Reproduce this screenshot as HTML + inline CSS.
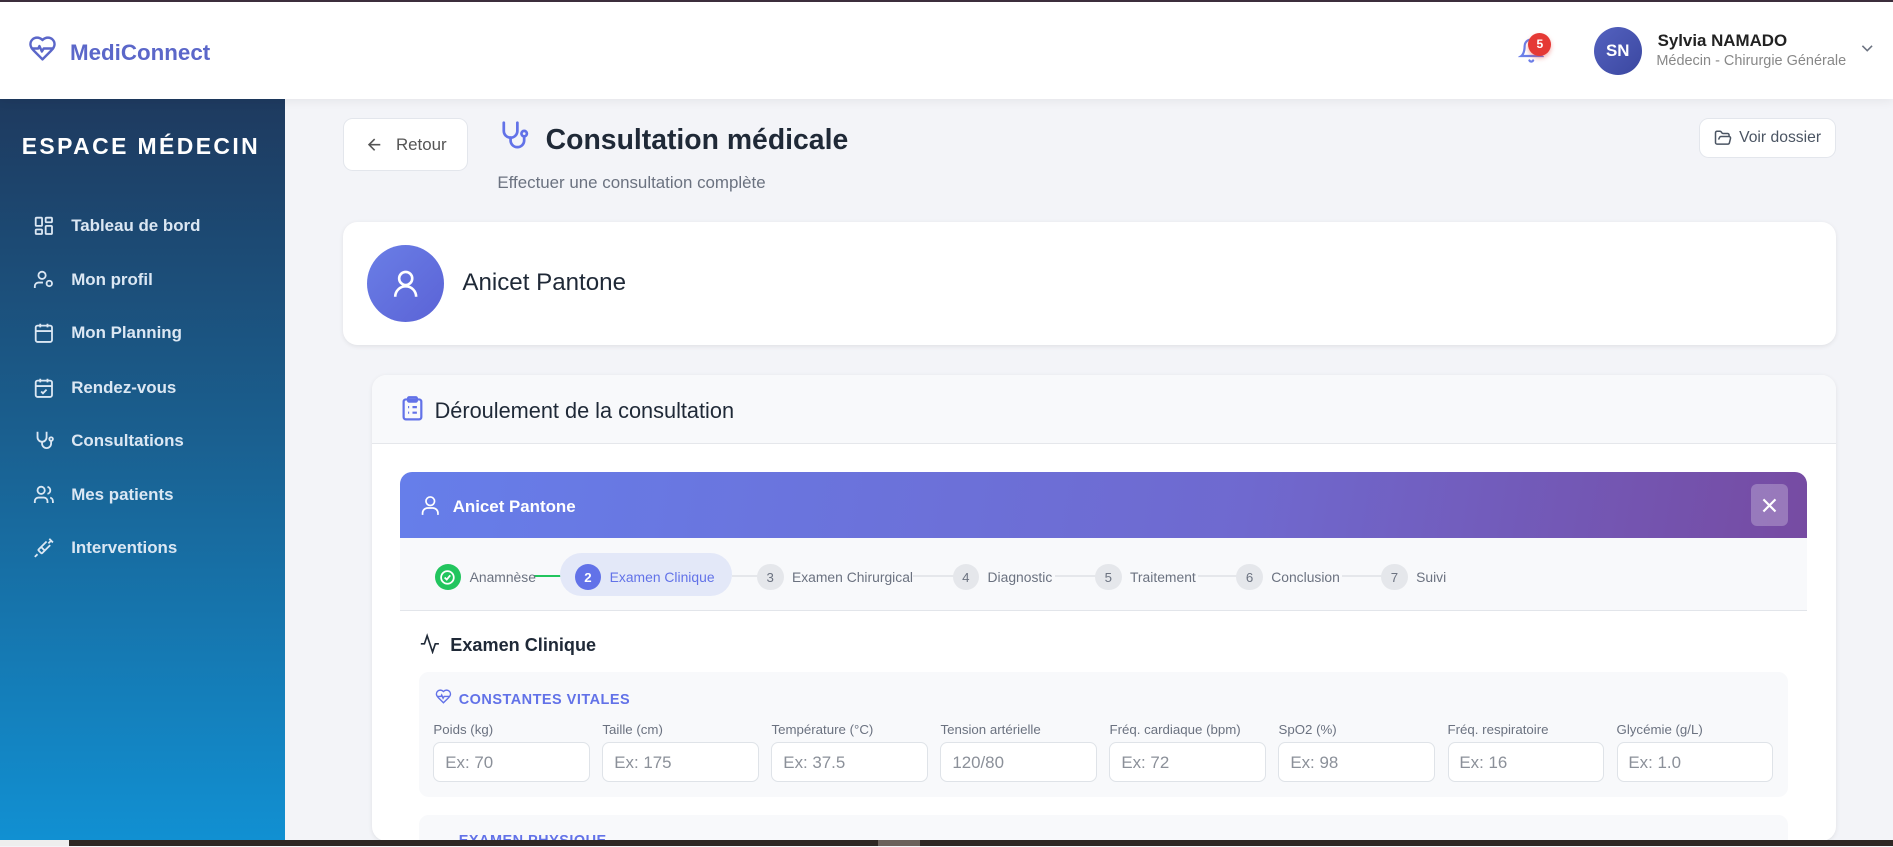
<!DOCTYPE html>
<html><head><meta charset="utf-8"><style>
html{zoom:1.20727}
*{box-sizing:border-box;margin:0;padding:0}
body{width:1568px;height:701px;overflow:hidden;background:#f3f4f8;font-family:"Liberation Sans","DejaVu Sans",sans-serif;color:#1f2937}
#w{position:relative;width:1568px;height:701px;overflow:hidden}
.abs{position:absolute}
svg{display:block}
.topline{left:0;top:0;width:1568px;height:2px;background:#3d2f3d}
.header{left:0;top:2px;width:1568px;height:80px;background:#fff;box-shadow:0 2px 8px rgba(0,0,0,.06);z-index:2}
.side{left:0;top:82px;width:236px;height:614px;background:linear-gradient(180deg,#1e3a5f 0%,#1a5f8f 45%,#1190d2 100%)}
.nav{position:absolute;left:27px;display:flex;align-items:center;color:#dbe7f3;font-weight:bold;font-size:14px}
.nav svg{margin-right:14px}
.btn{background:#fff;border:1px solid #e3e6ec;border-radius:8px}
.card{background:#fff;border-radius:12px;box-shadow:0 1px 4px rgba(0,0,0,.08)}
.step{position:absolute;top:467px;display:flex;align-items:center;font-size:11.5px;color:#6b7280}
.num{width:22px;height:22px;border-radius:50%;background:#e5e7eb;color:#6b7280;font-size:11px;display:flex;align-items:center;justify-content:center;margin-right:7px}
.line{position:absolute;top:476px;height:2px;background:#e5e7eb}
.lbl{position:absolute;top:598px;font-size:11px;color:#6b7280}
.inp{position:absolute;top:615px;width:130px;height:33px;border:1px solid #dfe3e8;border-radius:6px;background:#fff;font-size:14px;color:#8b9099;padding:8px 9px}
</style></head><body><div id="w">
<div class="abs topline"></div>
<div class="abs header">
  <div class="abs" style="left:23px;top:26px"><svg width="24" height="24" viewBox="0 0 24 24" fill="none" stroke="#5b67c9" stroke-width="2" stroke-linecap="round" stroke-linejoin="round"><path d="M19 14c1.5-1.5 3-3.2 3-5.5A5.5 5.5 0 0 0 16.5 3c-1.8 0-3 .5-4.5 2-1.5-1.5-2.7-2-4.5-2A5.5 5.5 0 0 0 2 8.5c0 2.3 1.5 4 3 5.5l7 7Z"/><path d="M3.2 12H8.5l1-2 2 4.5 1.5-2.5H20.8"/></svg></div>
  <div class="abs" style="left:58px;top:31px;font-size:18.5px;font-weight:bold;color:#5b67c9">MediConnect</div>
  <div class="abs" style="left:1257px;top:28px"><svg width="22" height="24" viewBox="0 0 24 24" fill="none" stroke="#6b7ee8" stroke-width="2" stroke-linecap="round"><path d="M6 8a6 6 0 0 1 12 0c0 7 3 9 3 9H3s3-2 3-9"/><path d="M10.3 21a1.9 1.9 0 0 0 3.4 0"/></svg></div>
  <div class="abs" style="left:1266px;top:25px;width:19px;height:19px;border-radius:50%;background:#e53935;color:#fff;font-size:10px;font-weight:bold;display:flex;align-items:center;justify-content:center;box-shadow:0 2px 4px rgba(229,57,53,.4)">5</div>
  <div class="abs" style="left:1320px;top:20px;width:40px;height:40px;border-radius:50%;background:linear-gradient(135deg,#5462c0,#3b47a0);color:#fff;font-weight:bold;font-size:14px;display:flex;align-items:center;justify-content:center">SN</div>
  <div class="abs" style="left:1373px;top:24px;font-size:14px;font-weight:bold;color:#222">Sylvia NAMADO</div>
  <div class="abs" style="left:1372px;top:42px;font-size:12px;color:#888">Médecin - Chirurgie Générale</div>
  <div class="abs" style="left:1541px;top:32px"><svg width="12" height="12" viewBox="0 0 12 12" fill="none" stroke="#6b7280" stroke-width="1.3"><path d="M2 4l4 4 4-4"/></svg></div>
</div>
<div class="abs side">
  <div class="abs" style="left:18px;top:28px;color:#fff;font-weight:bold;font-size:19px;letter-spacing:2px">ESPACE MÉDECIN</div>
  <div class="nav" style="top:96px"><svg width="18" height="18" viewBox="0 0 24 24" fill="none" stroke="#dbe7f3" stroke-width="2"><rect x="3" y="3" width="7" height="9" rx="1"/><rect x="14" y="3" width="7" height="5" rx="1"/><rect x="14" y="12" width="7" height="9" rx="1"/><rect x="3" y="16" width="7" height="5" rx="1"/></svg>Tableau de bord</div>
  <div class="nav" style="top:141px"><svg width="18" height="18" viewBox="0 0 24 24" fill="none" stroke="#dbe7f3" stroke-width="2"><circle cx="10" cy="7" r="4"/><path d="M2 21v-2a4 4 0 0 1 4-4h5"/><circle cx="18" cy="16" r="3"/></svg>Mon profil</div>
  <div class="nav" style="top:185px"><svg width="18" height="18" viewBox="0 0 24 24" fill="none" stroke="#dbe7f3" stroke-width="2"><rect x="3" y="4" width="18" height="18" rx="2"/><path d="M16 2v4M8 2v4M3 10h18"/></svg>Mon Planning</div>
  <div class="nav" style="top:230px"><svg width="18" height="18" viewBox="0 0 24 24" fill="none" stroke="#dbe7f3" stroke-width="2"><rect x="3" y="4" width="18" height="18" rx="2"/><path d="M16 2v4M8 2v4M3 10h18M9 16l2 2 4-4"/></svg>Rendez-vous</div>
  <div class="nav" style="top:274px"><svg width="18" height="18" viewBox="0 0 24 24" fill="none" stroke="#dbe7f3" stroke-width="2"><path d="M5 2v6a5 5 0 0 0 10 0V2"/><path d="M10 13v2a5 5 0 0 0 10 0v-3"/><circle cx="20" cy="10" r="2"/></svg>Consultations</div>
  <div class="nav" style="top:319px"><svg width="18" height="18" viewBox="0 0 24 24" fill="none" stroke="#dbe7f3" stroke-width="2"><circle cx="9" cy="7" r="4"/><path d="M2 21v-2a4 4 0 0 1 4-4h6a4 4 0 0 1 4 4v2M16 3.1a4 4 0 0 1 0 7.8M22 21v-2a4 4 0 0 0-3-3.9"/></svg>Mes patients</div>
  <div class="nav" style="top:363px"><svg width="18" height="18" viewBox="0 0 24 24" fill="none" stroke="#dbe7f3" stroke-width="2"><path d="M18 2l4 4M17 7l3-3M19 9l-8.7 8.7a1 1 0 0 1-1.4 0L6.3 15.1a1 1 0 0 1 0-1.4L15 5M9 11l4 4M5 19l-3 3"/></svg>Interventions</div>
</div>

<div class="abs btn" style="left:284px;top:98px;width:104px;height:44px;display:flex;align-items:center;justify-content:center;font-size:14px;color:#555">
  <svg width="16" height="16" viewBox="0 0 24 24" fill="none" stroke="#555" stroke-width="2" style="margin-right:10px"><path d="M19 12H5M12 19l-7-7 7-7"/></svg>Retour</div>
<div class="abs" style="left:412px;top:99px"><svg width="27" height="27" viewBox="0 0 24 24" fill="none" stroke="#6272e8" stroke-width="2" stroke-linecap="round"><path d="M5 2v6a5 5 0 0 0 10 0V2"/><path d="M10 13v2a5 5 0 0 0 10 0v-3"/><circle cx="20" cy="10" r="2"/></svg></div>
<div class="abs" style="left:452px;top:103px;font-size:23.5px;font-weight:bold;color:#1f2937">Consultation médicale</div>
<div class="abs" style="left:412px;top:143px;font-size:14px;color:#6b7280">Effectuer une consultation complète</div>
<div class="abs btn" style="left:1407px;top:98px;width:114px;height:33px;display:flex;align-items:center;justify-content:center;font-size:13px;color:#4b5563">
  <svg width="15" height="15" viewBox="0 0 24 24" fill="none" stroke="#4b5563" stroke-width="2" style="margin-right:6px"><path d="M6 14l1.5-3A2 2 0 0 1 9.2 10H20a2 2 0 0 1 1.9 2.5l-1.5 6A2 2 0 0 1 18.5 20H4a2 2 0 0 1-2-2V5a2 2 0 0 1 2-2h3.9a2 2 0 0 1 1.7.9l.8 1.2a2 2 0 0 0 1.7.9H18a2 2 0 0 1 2 2v2"/></svg>Voir dossier</div>

<div class="abs card" style="left:284px;top:184px;width:1237px;height:102px">
  <div class="abs" style="left:20px;top:19px;width:64px;height:64px;border-radius:50%;background:linear-gradient(135deg,#6a7ee6,#5b63d6);display:flex;align-items:center;justify-content:center"><svg width="26" height="26" viewBox="0 0 24 24" fill="none" stroke="#fff" stroke-width="2"><circle cx="12" cy="8" r="5"/><path d="M4 22a8 8 0 0 1 16 0"/></svg></div>
  <div class="abs" style="left:99px;top:39px;font-size:20px;color:#1f2937">Anicet Pantone</div>
</div>

<div class="abs card" style="left:308px;top:311px;width:1213px;height:386px;overflow:hidden">
  <div style="height:57px;background:#f8f9fb;border-bottom:1px solid #e5e7eb"></div>
</div>
<div class="abs" style="left:332px;top:327px"><svg width="19" height="22" viewBox="0 0 20 24" fill="none" stroke="#6272e8" stroke-width="2"><rect x="2" y="4" width="16" height="18" rx="2"/><rect x="6" y="2" width="8" height="4" rx="1"/><path d="M6 11h1M10 11h4M6 16h1M10 16h4"/></svg></div>
<div class="abs" style="left:360px;top:330px;font-size:18px;color:#1f2937">Déroulement de la consultation</div>

<div class="abs" style="left:331px;top:391px;width:1166px;height:55px;border-radius:10px 10px 0 0;background:linear-gradient(100deg,#667eea 0%,#6f69cf 60%,#764ba2 100%)">
  <div class="abs" style="left:17px;top:18px"><svg width="17" height="19" viewBox="0 0 24 24" fill="none" stroke="#fff" stroke-width="2"><circle cx="12" cy="7" r="5"/><path d="M3 23v-2a6 6 0 0 1 6-6h6a6 6 0 0 1 6 6v2"/></svg></div>
  <div class="abs" style="left:44px;top:21px;color:#fff;font-weight:bold;font-size:14px">Anicet Pantone</div>
  <div class="abs" style="left:1119px;top:10px;width:31px;height:35px;border-radius:5px;background:rgba(255,255,255,.25);display:flex;align-items:center;justify-content:center"><svg width="14" height="14" viewBox="0 0 14 14" stroke="#fff" stroke-width="1.8"><path d="M2 2l10 10M12 2L2 12"/></svg></div>
</div>
<div class="abs" style="left:331px;top:446px;width:1166px;height:60px;background:#f8f9fb;border-bottom:1px solid #e2e5ea"></div>
<div class="line" style="left:442px;width:36px;background:#22c55e"></div>
<div class="line" style="left:606px;width:24px"></div>
<div class="line" style="left:756px;width:34px"></div>
<div class="line" style="left:874px;width:36px"></div>
<div class="line" style="left:992px;width:34px"></div>
<div class="line" style="left:1112px;width:35px"></div>
<div class="step" style="left:360px"><div class="num" style="background:#22c55e"><svg width="14" height="14" viewBox="0 0 24 24" fill="none" stroke="#fff" stroke-width="2.5"><circle cx="12" cy="12" r="9"/><path d="M8 12l3 3 5-6"/></svg></div>Anamnèse</div>
<div class="abs" style="left:464px;top:458px;width:142px;height:36px;border-radius:18px;background:#e3e8f8"></div>
<div class="step" style="left:476px;color:#6272e8"><div class="num" style="background:#6272e8;color:#fff;font-weight:bold">2</div>Examen Clinique</div>
<div class="step" style="left:627px"><div class="num">3</div>Examen Chirurgical</div>
<div class="step" style="left:789px"><div class="num">4</div>Diagnostic</div>
<div class="step" style="left:907px"><div class="num">5</div>Traitement</div>
<div class="step" style="left:1024px"><div class="num">6</div>Conclusion</div>
<div class="step" style="left:1144px"><div class="num">7</div>Suivi</div>

<div class="abs" style="left:347px;top:524px"><svg width="18" height="18" viewBox="0 0 24 24" fill="none" stroke="#1f2937" stroke-width="1.8"><path d="M22 12h-4l-3 9L9 3l-3 9H2"/></svg></div>
<div class="abs" style="left:373px;top:526px;font-size:15px;font-weight:bold;color:#1f2937">Examen Clinique</div>

<div class="abs" style="left:347px;top:557px;width:1134px;height:103px;border-radius:8px;background:#f8f9fb"></div>
<div class="abs" style="left:360px;top:570px"><svg width="14" height="14" viewBox="0 0 24 24" fill="none" stroke="#6272e8" stroke-width="2"><path d="M19 14c1.5-1.5 3-3.2 3-5.5A5.5 5.5 0 0 0 16.5 3c-1.8 0-3 .5-4.5 2-1.5-1.5-2.7-2-4.5-2A5.5 5.5 0 0 0 2 8.5c0 2.3 1.5 4 3 5.5l7 7Z"/><path d="M3.2 12H8.5l1-2 2 4.5 1.5-2.5H20.8"/></svg></div>
<div class="abs" style="left:380px;top:573px;font-size:12px;font-weight:bold;color:#6272e8;letter-spacing:.4px">CONSTANTES VITALES</div>
<div class="lbl" style="left:359px">Poids (kg)</div><div class="inp" style="left:359px">Ex: 70</div>
<div class="lbl" style="left:499px">Taille (cm)</div><div class="inp" style="left:499px">Ex: 175</div>
<div class="lbl" style="left:639px">Température (°C)</div><div class="inp" style="left:639px">Ex: 37.5</div>
<div class="lbl" style="left:779px">Tension artérielle</div><div class="inp" style="left:779px">120/80</div>
<div class="lbl" style="left:919px">Fréq. cardiaque (bpm)</div><div class="inp" style="left:919px">Ex: 72</div>
<div class="lbl" style="left:1059px">SpO2 (%)</div><div class="inp" style="left:1059px">Ex: 98</div>
<div class="lbl" style="left:1199px">Fréq. respiratoire</div><div class="inp" style="left:1199px">Ex: 16</div>
<div class="lbl" style="left:1339px">Glycémie (g/L)</div><div class="inp" style="left:1339px">Ex: 1.0</div>

<div class="abs" style="left:347px;top:675px;width:1134px;height:30px;border-radius:8px;background:#f8f9fb"></div>
<div class="abs" style="left:380px;top:690px;font-size:12px;font-weight:bold;color:#6272e8;letter-spacing:.4px">EXAMEN PHYSIQUE</div>

<div class="abs" style="left:0;top:696px;width:1568px;height:6px;background:#2e2824"></div>
<div class="abs" style="left:0;top:696px;width:57px;height:6px;background:#eee"></div>
<div class="abs" style="left:727px;top:696px;width:35px;height:6px;background:#6b625c"></div>
</div></body></html>
